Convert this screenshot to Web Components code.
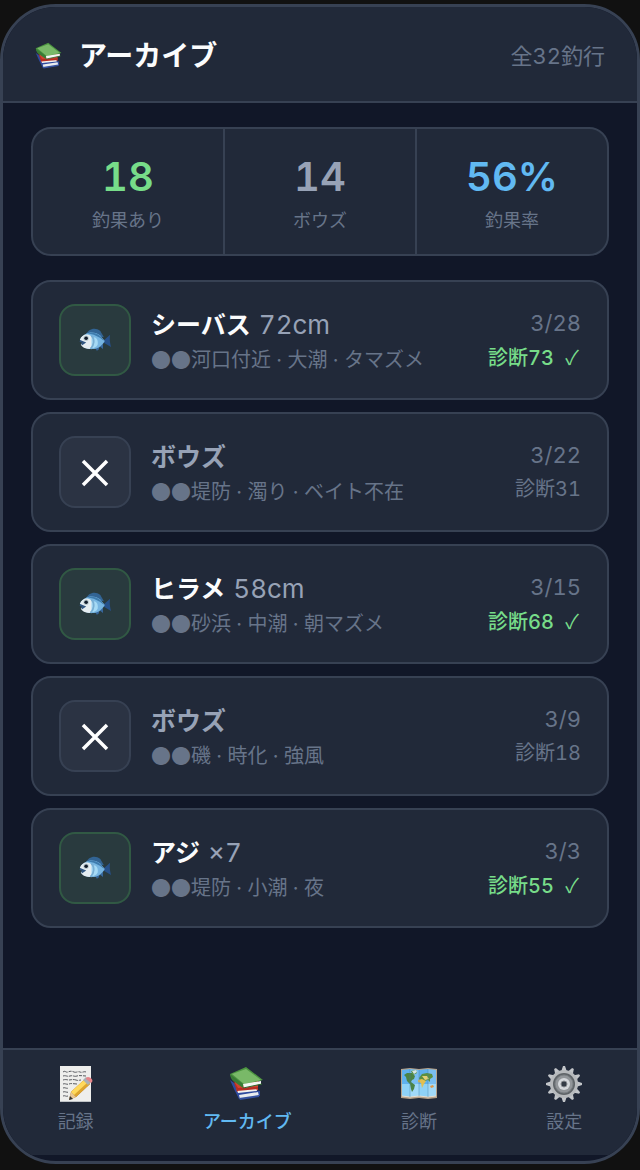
<!DOCTYPE html>
<html lang="ja">
<head>
<meta charset="utf-8">
<meta name="viewport" content="width=device-width, initial-scale=1">
<title>アーカイブ</title>
<style>
    :root {
        --bg-color: #111728;
        --surface-color: #212939;
        --border-color: #374153;
        --muted-color: #677489;
        --soft-color: #97a2b6;
        --green-color: #77dc89;
        --blue-color: #61b9f2;
        --white-color: #fbfcfd;
        --radius-card: 20px;
        --font-kana: "Noto Sans CJK JP", sans-serif;
    }

    body {
        margin: 0;
        background-color: #111;
        color: var( --white-color );
        font-family: Inter, "Noto Sans CJK JP", sans-serif;
        font-variant-numeric: tabular-nums;
        display: flex;
        flex-direction: column;
        min-height: 100vh;
    }
</style>
</head>
<body>
<phone-frame>
    <archive-header slot="header" count="全32釣行">アーカイブ</archive-header>
    <stats-bar>
        <stat-cell value="18" tone="green">釣果あり</stat-cell>
        <stat-cell value="14">ボウズ</stat-cell>
        <stat-cell value="56%" tone="blue">釣果率</stat-cell>
    </stats-bar>
    <trip-list>
        <trip-card hit name="シーバス" size="72cm" date="3/28" score="診断73">河口付近 · 大潮 · タマズメ</trip-card>
        <trip-card name="ボウズ" date="3/22" score="診断31">堤防 · 濁り · ベイト不在</trip-card>
        <trip-card hit name="ヒラメ" size="58cm" date="3/15" score="診断68">砂浜 · 中潮 · 朝マズメ</trip-card>
        <trip-card name="ボウズ" date="3/9" score="診断18">磯 · 時化 · 強風</trip-card>
        <trip-card hit name="アジ" size="×7" date="3/3" score="診断55">堤防 · 小潮 · 夜</trip-card>
    </trip-list>
    <tab-bar slot="footer">
        <tab-item icon="memo" href="#record">記録</tab-item>
        <tab-item icon="books" href="#archive" active>アーカイブ</tab-item>
        <tab-item icon="map" href="#diagnosis">診断</tab-item>
        <tab-item icon="gear" href="#settings">設定</tab-item>
    </tab-bar>
</phone-frame>

<script>
const gearTeeth = Array.from( { length: 12 }, ( _, i ) =>
    `<path d="M15 6l2-6h2l2 6z" transform="rotate(${ i * 30 } 18 18)"/>`
).join( '' );

const icons = {
    books: `
        <path d="M1 14l4 9 5 10 21-3v-5L12 22z" fill="#2e4a9e"/>
        <path d="M10 29l19-3 1 4-19 3z" fill="#e9ecef"/>
        <path d="M10 32l20-3v2l-19 3z" fill="#35519f"/>
        <path d="M5 13l3 13 21-2V15z" fill="#d3432f"/>
        <path d="M8 23l19-1 1 3-19 2z" fill="#f3f1ef"/>
        <path d="M4 14l5 8 20-1v2L8 25z" fill="#b62d22"/>
        <path d="M1 8L17 1l17 13-19 5-1 2L2 12z" fill="#4c9440"/>
        <path d="M3 8l14-5 15 11-17 4z" fill="#79b968"/>
        <path d="M14 18l18-3v3l-17 4z" fill="#f4f6f3"/>
        <path d="M1 8l13 10v4L3 14z" fill="#397c35"/>
        <path d="M14 22l19-4" stroke="#2d692c" fill="none"/>`,
    memo: `
        <path d="M2 0h31v36H2z" fill="#eeeeec"/>
        <path d="M2 35h31v1H2z" fill="#bfc2c5"/>
        <path d="M5 6c2-2 3 1 5 0s4-1 6 0 4-1 6 0 4-1 6 0M5 10c3-1 4 1 7 0s4 1 7 0 6 0 9 0M5 14c3-1 4 0 6 0s4-1 7 0 3 0 5 0M5 18c2-1 4 1 6 0s5 0 8 0M5 22c2-1 3 1 6 0M5 26c2-1 4 1 6 0M5 30c2-1 3 1 5 0" fill="none" stroke="#595b60" stroke-dasharray="5 1 3 1"/>
        <path d="M11 34l2-8 14-13 5 5-14 13z" fill="#a86b20"/>
        <path d="M13 26l14-13 5 5-14 13z" fill="#dda52f"/>
        <path d="M13 26l14-13 3 3-14 13z" fill="#ffd95c"/>
        <path d="M11 34l2-8 5 5z" fill="#e8c795"/>
        <path d="M11 34l1-4 3 3z" fill="#333"/>
        <path d="M25 14l3-3 5 5-3 3z" fill="#a9b0b6"/>
        <path d="M28 12c2-3 8 1 6 4l-1 1-5-4z" fill="#e7858a"/>`,
    map: `
        <path d="M0 3l9-1 9 1 9-1 9 1v29l-9 1-9-1-9 1-9-1z" fill="#b7a28a"/>
        <path d="M1 4l8-1 9 1 9-1 8 1v26l-8 1-9-1-9 1-8-1z" fill="#5fb1ee"/>
        <path d="M1 18h34v12l-8 1-9-1-9 1-8-1z" fill="#8fd2f7"/>
        <path d="M9 3l9 1v26l-9 1zM27 3l8 1v26l-8 1z" fill="#fff" opacity=".17"/>
        <path d="M3 9l3-2h5l3 3-1 3-2 1-1 2 4 3-1 4-2 3-1-3-1-5-3-3-1-4z" fill="#4b8345"/>
        <path d="M10 5l5-1 1 3-4 2zM18 12l3-4 5-1 5 1 1 3-3 2v3l-2-2-3 1-3-1-2 1z" fill="#5b8f40"/>
        <path d="M17 14l4-1 4 2-2 3-2 4-1-5-3-1z" fill="#e2bf51"/>
        <path d="M21 10h5l2 3-4 1z" fill="#e4cf75"/>
        <path d="M29 20l3-1 1 2-3 1z" fill="#df9645"/>
        <path d="M11 5l4-1 1 2-3 2z" fill="#d7e5e7"/>
        <path d="M1 30l8 1 9-1 9 1 8-1" fill="none" stroke="#e7ddce"/>
        <path d="M9 3v28M18 4v26M27 3v28" fill="none" stroke="#417fa8" opacity=".4"/>`,
    gear: `
        <g fill="#c2c5c9">${ gearTeeth }</g>
        <circle cx="18" cy="18" r="14" fill="#b7babd"/>
        <circle cx="18" cy="18" r="11" fill="#5f6468"/>
        <circle cx="18" cy="18" r="9" fill="#92969a" stroke="#7b8084"/>
        <circle cx="18" cy="18" r="6" fill="#d5d8dc"/>
        <circle cx="18" cy="18" r="3" fill="#343b46" stroke="#85898e"/>`,
    fish: `
        <path d="M8 12C10 6 18 3 24 8l4 7z" fill="#326494"/>
        <path d="M27 19l8-7c-1 5 0 9 1 14l-8-5z" fill="#27518a"/>
        <path d="M18 26l2 4 2-1 1-3zM23 25l4 3v-6z" fill="#37669b"/>
        <path d="M1 18C5 9 17 7 24 13l5 6c-4 7-10 10-17 9-5 0-9-3-9-6l2-1z" fill="#77b5e1"/>
        <path d="M9 11c7-3 15 0 19 8-6-5-12-8-19-8z" fill="#3f7cae"/>
        <path d="M1 18c2-6 8-8 13-4 2 4 2 9-2 14-6 0-9-3-10-5l3-2z" fill="#e5edf1"/>
        <path d="M14 16c4-3 8 1 7 7-1 3-4 4-7 4z" fill="#a6daf5"/>
        <path d="M14 13c4 4 3 11-1 15" fill="none" stroke="#78aed3" stroke-width="2"/>
        <path d="M1 19l5 2-3 2" fill="none" stroke="#315681" stroke-width="2"/>
        <circle cx="8" cy="16" r="3" fill="#b9c8ce"/>
        <circle cx="8" cy="16" r="2" fill="#111c2b"/>`,
    cross: `<path d="M6 7l24 24M30 7L6 31" fill="none" stroke="#fff" stroke-width="3.5"/>`
};

class EmojiIcon extends HTMLElement {
    constructor(){
        super();

        this.attachShadow( { mode:"open" } );
    }

    connectedCallback(){
        this.shadowRoot.innerHTML = `
            <style>
                :host {
                    display: block;
                    width: 36px;
                    height: 36px;
                    flex: none;
                }

                svg {
                    display: block;
                    width: 100%;
                    height: 100%;
                }
            </style>
            <svg viewBox="0 0 36 36" aria-hidden="true">${ icons[ this.getAttribute( 'name' ) ] }</svg>
        `;
    }
}

const phoneFrameTemplate = document.createElement('template');
phoneFrameTemplate.innerHTML = `
    <style>
        :host {
            box-sizing: border-box;
            display: flex;
            flex-direction: column;
            flex: 1;
            margin: 4px 0 6px;
            padding-bottom: 6px;
            border: 3px solid var( --border-color );
            border-radius: 56px;
            background-color: var( --bg-color );
            overflow: hidden;
        }

        main {
            flex: 1;
            display: flex;
            flex-direction: column;
            gap: 24px;
            padding: 24px 28px;
        }
    </style>
    <slot name="header"></slot>
    <main><slot></slot></main>
    <slot name="footer"></slot>
`;

class PhoneFrame extends HTMLElement {
    constructor(){
        super();

        this.attachShadow( { mode:"open" } );
        this.shadowRoot.appendChild( phoneFrameTemplate.content.cloneNode( true ) );
    }
}

class ArchiveHeader extends HTMLElement {
    constructor(){
        super();

        this.attachShadow( { mode:"open" } );
    }

    connectedCallback(){
        this.shadowRoot.innerHTML = `
            <style>
                :host {
                    display: block;
                    background-color: var( --surface-color );
                    border-bottom: 2px solid var( --border-color );
                }

                header {
                    display: flex;
                    align-items: center;
                    justify-content: space-between;
                    padding: 25px 32px;
                }

                h1 {
                    display: flex;
                    align-items: center;
                    gap: 16px;
                    margin: 0;
                    padding-top: 4px;
                    font-size: 28px;
                    line-height: 40px;
                    font-weight: 700;
                }

                emoji-icon {
                    width: 28px;
                    height: 28px;
                }

                .count {
                    color: var( --muted-color );
                    font-size: 22px;
                }
            </style>
            <header>
                <h1><emoji-icon name="books"></emoji-icon><slot></slot></h1>
                <div class="count">${ this.getAttribute( 'count' ) }</div>
            </header>
        `;
    }
}

const statsBarTemplate = document.createElement('template');
statsBarTemplate.innerHTML = `
    <style>
        :host {
            display: grid;
            grid-template-columns: repeat( 3, 1fr );
            gap: 2px;
            border: 2px solid var( --border-color );
            border-radius: var( --radius-card );
            background-color: var( --border-color );
            overflow: hidden;
        }
    </style>
    <slot></slot>
`;

class StatsBar extends HTMLElement {
    constructor(){
        super();

        this.attachShadow( { mode:"open" } );
        this.shadowRoot.appendChild( statsBarTemplate.content.cloneNode( true ) );
    }
}

class StatCell extends HTMLElement {
    constructor(){
        super();

        this.attachShadow( { mode:"open" } );
    }

    connectedCallback(){
        this.shadowRoot.innerHTML = `
            <style>
                :host {
                    display: flex;
                    flex-direction: column;
                    align-items: center;
                    gap: 6px;
                    padding: 24px 8px 19px;
                    background-color: var( --surface-color );
                }

                .value {
                    color: var( --soft-color );
                    font-size: 40px;
                    line-height: 48px;
                    font-weight: 600;
                }

                :host( [tone="green"] ) .value {
                    color: var( --green-color );
                }

                :host( [tone="blue"] ) .value {
                    color: var( --blue-color );
                }

                .label {
                    color: var( --muted-color );
                    font-size: 18px;
                    line-height: 28px;
                }
            </style>
            <div class="value">${ this.getAttribute( 'value' ) }</div>
            <div class="label"><slot></slot></div>
        `;
    }
}

const tripListTemplate = document.createElement('template');
tripListTemplate.innerHTML = `
    <style>
        :host {
            display: flex;
            flex-direction: column;
            gap: 12px;
        }
    </style>
    <slot></slot>
`;

class TripList extends HTMLElement {
    constructor(){
        super();

        this.attachShadow( { mode:"open" } );
        this.shadowRoot.appendChild( tripListTemplate.content.cloneNode( true ) );
    }
}

class TripCard extends HTMLElement {
    constructor(){
        super();

        this.attachShadow( { mode:"open" } );
    }

    connectedCallback(){
        const hit = this.hasAttribute( 'hit' );
        const size = this.getAttribute( 'size' );

        this.shadowRoot.innerHTML = `
            <style>
                :host {
                    display: block;
                    border: 2px solid var( --border-color );
                    border-radius: var( --radius-card );
                    background-color: var( --surface-color );
                }

                article {
                    display: flex;
                    align-items: center;
                    gap: 20px;
                    padding: 22px 26px;
                }

                .tile {
                    box-sizing: border-box;
                    display: flex;
                    align-items: center;
                    justify-content: center;
                    flex: none;
                    width: 72px;
                    height: 72px;
                    border: 2px solid var( --border-color );
                    border-radius: 16px;
                    background-color: #2b3343;
                }

                :host( [hit] ) .tile {
                    border-color: #315944;
                    background-color: #293a3e;
                }

                :host( [hit] ) emoji-icon {
                    width: 34px;
                    height: 32px;
                }

                .info {
                    flex: 1;
                    min-width: 0;
                    padding-top: 4px;
                }

                h2 {
                    display: flex;
                    align-items: baseline;
                    gap: 8px;
                    margin: 0;
                    color: var( --soft-color );
                    font-size: 25px;
                    line-height: 34px;
                    font-weight: 700;
                }

                :host( [hit] ) .name {
                    color: var( --white-color );
                }

                .size {
                    font-size: 26px;
                    font-weight: 400;
                }

                .place {
                    display: flex;
                    padding-top: 2px;
                    color: var( --muted-color );
                    font-size: 20px;
                    line-height: 32px;
                }

                .hidden-spot {
                    font-family: var( --font-kana );
                }

                .result {
                    flex: none;
                    color: var( --muted-color );
                    font-size: 22px;
                    line-height: 34px;
                    text-align: right;
                }

                .score {
                    font-size: 20px;
                }

                :host( [hit] ) .score {
                    color: var( --green-color );
                    font-weight: 500;
                }

                .check {
                    padding: 0 2px 0 6px;
                    font-family: var( --font-kana );
                    font-weight: 400;
                }
            </style>
            <article>
                <div class="tile"><emoji-icon name="${ hit ? 'fish' : 'cross' }"></emoji-icon></div>
                <div class="info">
                    <h2><span class="name">${ this.getAttribute( 'name' ) }</span>${ size ? ` <span class="size">${ size }</span>` : '' }</h2>
                    <div class="place"><span class="hidden-spot">●●</span><slot></slot></div>
                </div>
                <div class="result">
                    <div>${ this.getAttribute( 'date' ) }</div>
                    <div class="score">${ this.getAttribute( 'score' ) }${ hit ? ' <span class="check">✓</span>' : '' }</div>
                </div>
            </article>
        `;
    }
}

const tabBarTemplate = document.createElement('template');
tabBarTemplate.innerHTML = `
    <style>
        :host {
            display: block;
            border-top: 2px solid var( --border-color );
            background-color: var( --surface-color );
        }

        nav {
            display: flex;
            justify-content: space-around;
            padding: 16px 0 19px;
        }
    </style>
    <nav><slot></slot></nav>
`;

class TabBar extends HTMLElement {
    constructor(){
        super();

        this.attachShadow( { mode:"open" } );
        this.shadowRoot.appendChild( tabBarTemplate.content.cloneNode( true ) );
    }
}

class TabItem extends HTMLElement {
    constructor(){
        super();

        this.attachShadow( { mode:"open" } );
    }

    connectedCallback(){
        this.shadowRoot.innerHTML = `
            <style>
                :host {
                    display: block;
                }

                a {
                    display: flex;
                    flex-direction: column;
                    align-items: center;
                    gap: 6px;
                    color: var( --muted-color );
                    font-size: 18px;
                    line-height: 28px;
                    text-decoration: none;
                }

                :host( [active] ) a {
                    color: var( --blue-color );
                    font-weight: 500;
                }
            </style>
            <a href="${ this.getAttribute( 'href' ) }">
                <emoji-icon name="${ this.getAttribute( 'icon' ) }"></emoji-icon>
                <span><slot></slot></span>
            </a>
        `;
    }
}

window.customElements.define( 'emoji-icon', EmojiIcon )
window.customElements.define( 'phone-frame', PhoneFrame )
window.customElements.define( 'archive-header', ArchiveHeader )
window.customElements.define( 'stats-bar', StatsBar )
window.customElements.define( 'stat-cell', StatCell )
window.customElements.define( 'trip-list', TripList )
window.customElements.define( 'trip-card', TripCard )
window.customElements.define( 'tab-bar', TabBar )
window.customElements.define( 'tab-item', TabItem )
</script>
</body>
</html>
